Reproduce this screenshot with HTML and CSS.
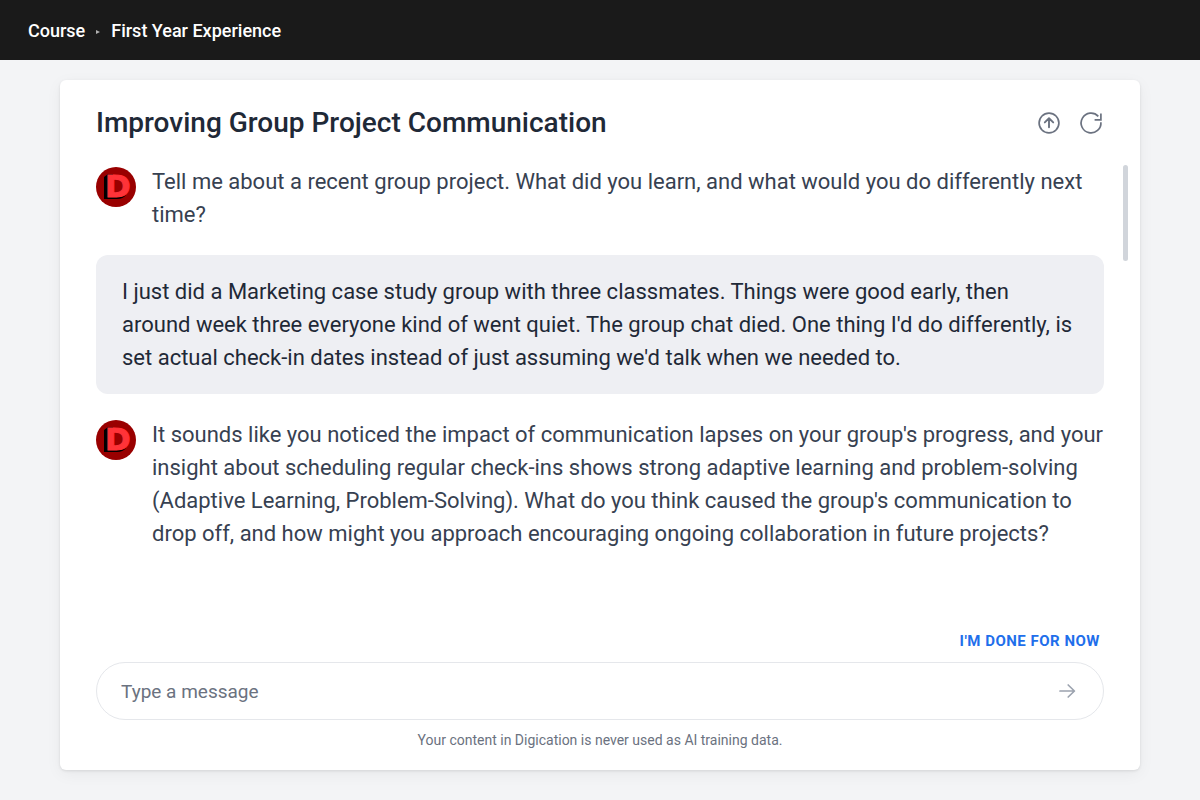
FILE: index.html
```html
<!DOCTYPE html>
<html lang="en">
<head>
    <meta charset="UTF-8">
    <meta name="viewport" content="width=device-width, initial-scale=1">
    <title>Improving Group Project Communication</title>
    <link rel="stylesheet" href="styles.css">
</head>
<body>
    <header class="topbar">
        <nav class="breadcrumb">
            <a href="#">Course</a>
            <svg class="separator" width="4" height="6" viewBox="0 0 4 6" aria-hidden="true"><path d="M0 2l4 2-4 2z" fill="#b0b0b0"/></svg>
            <a href="#">First Year Experience</a>
        </nav>
    </header>

    <main class="page">
        <section class="card">
            <!-- Title and actions -->
            <div class="card-header">
                <h1>Improving Group Project Communication</h1>
                <div class="actions">
                    <button type="button" class="icon-button" aria-label="Share">
                        <svg width="24" height="24" viewBox="0 0 24 24" fill="none" stroke="currentColor" stroke-width="1.7" stroke-linecap="round" stroke-linejoin="round">
                            <circle cx="12" cy="12" r="9.9"/>
                            <path d="M12 16.3V7.6M7.8 11.4L12 7.3l4.2 4.1" stroke-width="1.9"/>
                        </svg>
                    </button>
                    <button type="button" class="icon-button" aria-label="Restart">
                        <svg width="24" height="24" viewBox="0 0 24 24" fill="none" stroke="currentColor" stroke-width="1.7">
                            <path d="M21.9 11.2A9.9 9.9 0 1 1 19.3 5.3"/>
                            <path d="M21.9 2.6v6.2h-6.3"/>
                        </svg>
                    </button>
                </div>
            </div>

            <!-- Conversation -->
            <div class="chat">
                <div class="message">
                    <svg class="avatar" viewBox="0 0 40 40" aria-hidden="true">
                        <circle class="disc" cx="20" cy="20" r="20"/>
                        <path class="shade" d="M12 7L8 10v22h13q6 0 9-4l-4-3H17V7z"/>
                        <rect class="disc" x="17" y="12" width="11" height="13"/>
                        <text class="letter" x="9" y="30">D</text>
                    </svg>
                    <p>Tell me about a recent group project. What did you learn, and what would you do differently next time?</p>
                </div>
                <div class="reply">
                    <p>I just did a Marketing case study group with three classmates. Things were good early, then around week three everyone kind of went quiet. The group chat died. One thing I'd do differently, is set actual check-in dates instead of just assuming we'd talk when we needed to.</p>
                </div>
                <div class="message">
                    <svg class="avatar" viewBox="0 0 40 40" aria-hidden="true">
                        <circle class="disc" cx="20" cy="20" r="20"/>
                        <path class="shade" d="M12 7L8 10v22h13q6 0 9-4l-4-3H17V7z"/>
                        <rect class="disc" x="17" y="12" width="11" height="13"/>
                        <text class="letter" x="9" y="30">D</text>
                    </svg>
                    <p>It sounds like you noticed the impact of communication lapses on your group's progress, and your insight about scheduling regular check-ins shows strong adaptive learning and problem-solving (Adaptive Learning, Problem-Solving). What do you think caused the group's communication to drop off, and how might you approach encouraging ongoing collaboration in future projects?</p>
                </div>
                <div class="scroll-thumb"></div>
            </div>

            <!-- Message box -->
            <div class="composer">
                <button type="button" class="done-button">I'M DONE FOR NOW</button>
                <form class="message-form">
                    <input type="text" name="message" placeholder="Type a message" aria-label="Message">
                    <button type="submit" class="send-button" aria-label="Send">
                        <svg width="18" height="16" viewBox="0 0 18 16" fill="none" stroke="currentColor" stroke-width="1.7" stroke-linecap="round" stroke-linejoin="round">
                            <path d="M2 8h14.4M10.2 2L16.4 8l-6.2 6"/>
                        </svg>
                    </button>
                </form>
                <p class="note">Your content in Digication is never used as AI training data.</p>
            </div>
        </section>
    </main>
</body>
</html>
```

FILE: styles.css
```css
* {
    box-sizing: border-box;
}
body {
    margin: 0;
    min-height: 100vh;
    display: flex;
    flex-direction: column;
    background: #f3f4f6;
    color: #1f2937;
    font-family: Roboto, "Liberation Sans", sans-serif;
}
h1, p {
    margin: 0;
}
button, input {
    font-family: inherit;
}
button {
    padding: 0;
    border: 0;
    background: none;
    cursor: pointer;
}
svg {
    display: block;
}

/* Top bar */
.topbar {
    display: flex;
    align-items: center;
    height: 60px;
    padding: 2px 28px 0;
    background: #1a1a1a;
}
.breadcrumb {
    display: flex;
    align-items: center;
    gap: 11px;
    font-size: 18px;
    font-weight: 500;
    line-height: 24px;
}
.breadcrumb a {
    color: #fff;
    text-decoration: none;
}

/* Card */
.page {
    flex: 1;
    display: flex;
    padding: 20px 60px 30px;
}
.card {
    flex: 1;
    display: flex;
    flex-direction: column;
    padding: 24px 36px 20px;
    background: #fff;
    border-radius: 6px;
    box-shadow: 0 1px 3px rgba(0, 0, 0, 0.1), 0 4px 16px rgba(0, 0, 0, 0.05);
}
.card-header {
    display: flex;
    align-items: center;
    justify-content: space-between;
    margin-bottom: 24px;
}
.card-header h1 {
    font-size: 28px;
    font-weight: 500;
    line-height: 37px;
}
.actions {
    display: flex;
    gap: 18px;
    padding-right: 1px;
}
.icon-button {
    color: #6b7280;
}

/* Conversation */
.chat {
    position: relative;
    flex: 1;
    display: flex;
    flex-direction: column;
    gap: 24px;
    font-size: 22px;
    line-height: 33px;
}
.message {
    display: flex;
    gap: 16px;
    color: #374151;
}
.avatar {
    flex: none;
    width: 40px;
    height: 40px;
    margin-top: 2px;
    font: bold 31px "DejaVu Sans", sans-serif;
}
.avatar .disc {
    fill: #990000;
}
.avatar .shade {
    fill: #000;
}
.avatar .letter {
    fill: #ff3338;
    stroke: #ff3338;
}
.reply {
    padding: 20px 26px;
    border-radius: 12px;
    background: #eeeff3;
}
.scroll-thumb {
    position: absolute;
    top: 0;
    right: -24px;
    width: 5px;
    height: 96px;
    border-radius: 3px;
    background: #d1d5db;
}

/* Message box */
.composer {
    display: flex;
    flex-direction: column;
}
.done-button {
    align-self: flex-end;
    margin: 0 4px 11px;
    color: #1f6feb;
    font-size: 15px;
    font-weight: 700;
    line-height: 20px;
    letter-spacing: 0.5px;
}
.message-form {
    display: flex;
    align-items: center;
    height: 58px;
    padding: 0 27px 0 24px;
    border: 1px solid #e5e7eb;
    border-radius: 29px;
}
.message-form input {
    flex: 1;
    min-width: 0;
    padding: 2px 0 0;
    border: 0;
    outline: 0;
    background: none;
    color: #1f2937;
    font-size: 19px;
    line-height: 24px;
}
.message-form input::placeholder {
    color: #6b7280;
}
.send-button {
    color: #9ca3af;
}
.note {
    margin-top: 10px;
    color: #6b7280;
    font-size: 14px;
    line-height: 20px;
    text-align: center;
}
```
